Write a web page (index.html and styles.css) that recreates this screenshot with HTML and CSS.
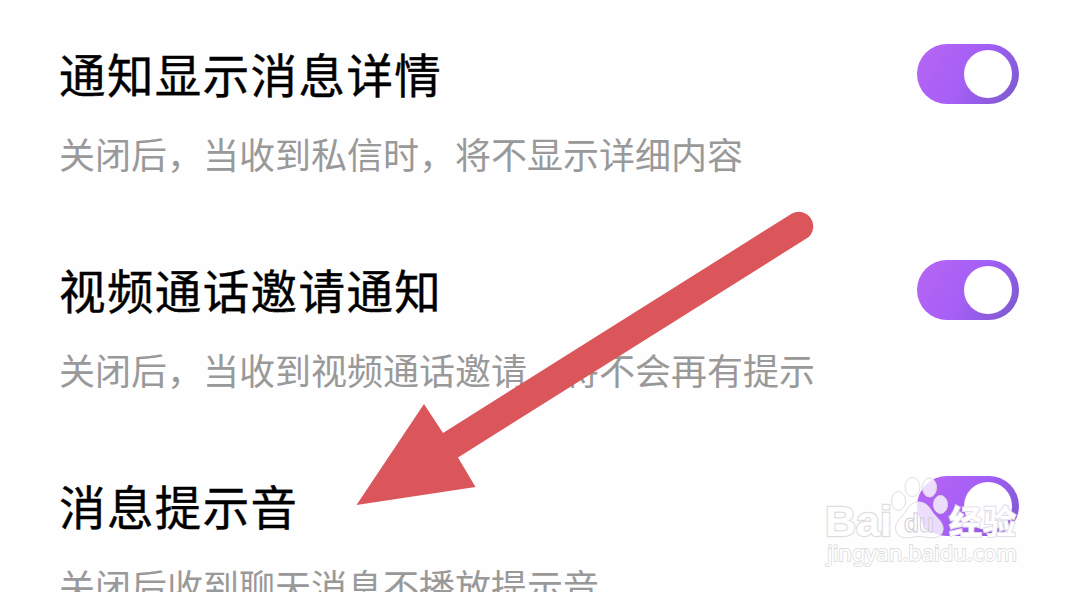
FILE: index.html
```html
<!DOCTYPE html>
<html lang="zh-CN">
<head>
<meta charset="utf-8">
<title>通知设置</title>
<link rel="stylesheet" href="styles.css">
</head>
<body>
<main class="settings">
  <section class="row">
    <div class="copy">
      <h2 class="title">通知显示消息详情</h2>
      <p class="desc">关闭后，当收到私信时，将不显示详细内容</p>
    </div>
    <div class="toggle"><span class="knob"></span></div>
  </section>
  <section class="row">
    <div class="copy">
      <h2 class="title">视频通话邀请通知</h2>
      <p class="desc">关闭后，当收到视频通话邀请，将不会再有提示</p>
    </div>
    <div class="toggle"><span class="knob"></span></div>
  </section>
  <section class="row">
    <div class="copy">
      <h2 class="title">消息提示音</h2>
      <p class="desc">关闭后收到聊天消息不播放提示音</p>
    </div>
    <div class="toggle"><span class="knob"></span></div>
  </section>
</main>
<svg class="arrow" viewBox="0 0 1076 592">
  <path d="M356.500 505 L424 404 L443 433 L792 213.500 A14.500 14.500 0 0 1 808 237.500 L458 457.500 L475.500 487 Z"/>
</svg>
<svg class="watermark" viewBox="810 460 266 132">
  <g class="mark">
    <ellipse cx="898.500" cy="501" rx="7" ry="9.500"/>
    <ellipse cx="912.500" cy="487" rx="7.500" ry="9.500"/>
    <ellipse cx="929.500" cy="487.500" rx="7" ry="9.500"/>
    <ellipse cx="940.500" cy="504.500" rx="7" ry="9"/>
    <path d="M918 502 C911 502 908 508 903 515 C898 521 894 525 896 531 C898 538 906 539 913 537 Q919 536 925 537 C933 539 942 538 943 530 C944 523 938 519 933 513 C928 505 925 502 918 502 Z"/>
    <text class="latin" x="825" y="536" textLength="67" lengthAdjust="spacingAndGlyphs">Bai</text>
    <text class="du" x="904" y="532" textLength="30" lengthAdjust="spacingAndGlyphs">du</text>
    <text class="cjk" x="949" y="534" textLength="67">经验</text>
    <text class="url" x="827" y="561" textLength="190" lengthAdjust="spacingAndGlyphs">jingyan.baidu.com</text>
  </g>
</svg>
</body>
</html>
```
FILE: styles.css
```css
* { box-sizing: border-box; }
body {
  margin: 0;
  width: 1076px;
  height: 592px;
  overflow: hidden;
  position: relative;
  background: #fefefe;
  font-family: "Noto Sans CJK SC", sans-serif;
}
.settings { height: 592px; overflow: hidden; padding: 44px 57px 0 59px; }
.row {
  display: flex;
  justify-content: space-between;
  align-items: flex-start;
  height: 216px;
}
.title {
  margin: 0;
  font-size: 46.500px;
  letter-spacing: 1.400px;
  font-weight: 400;
  -webkit-text-stroke: .4px #000;
  line-height: 57px;
  color: #000;
}
.desc {
  margin: 24px 0 0;
  font-size: 36px;
  line-height: 56px;
  color: #999;
  white-space: nowrap;
}
.toggle {
  flex: none;
  display: flex;
  justify-content: flex-end;
  width: 102px;
  height: 60px;
  padding: 6px 7px;
  border-radius: 30px;
  background: linear-gradient(120deg, #b464f4 10%, #a55ff5 50%, #825bd5 90%);
}
.knob {
  width: 48px;
  height: 48px;
  border-radius: 50%;
  background: #fff;
}
.arrow {
  position: absolute;
  left: 0;
  top: 0;
  width: 1076px;
  height: 592px;
  fill: #db565b;
}
.watermark {
  position: absolute;
  left: 810px;
  top: 460px;
  width: 266px;
  height: 132px;
}
.mark {
  fill: rgba(255, 255, 255, .78);
  stroke: #dedede;
  stroke-width: 1;
}
.latin {
  font: 700 43px "Liberation Sans", sans-serif;
  fill: #fff;
  stroke-width: 2.500;
  paint-order: stroke;
}
.du {
  font: 700 26px "Liberation Sans", sans-serif;
  fill: rgba(255, 255, 255, .3);
  stroke: #d2cbdc;
}
.cjk {
  font: 700 33px "Noto Sans CJK SC", sans-serif;
  fill: #fff;
  stroke: #e2dcea;
  stroke-width: 2;
  paint-order: stroke;
}
.url {
  font: 400 22px "Noto Sans", sans-serif;
  fill: #fff;
  stroke: #dedede;
  stroke-width: 1.800;
  paint-order: stroke;
}
```
